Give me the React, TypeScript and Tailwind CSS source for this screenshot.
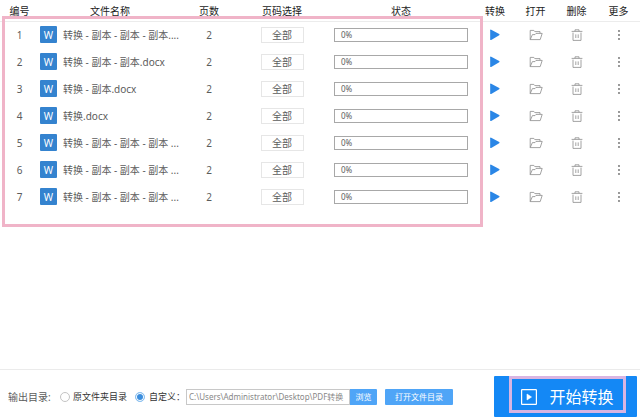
import { useState } from "react";

const files = [
  { id: 1, name: "转换 - 副本 - 副本 - 副本....", pages: 2, progress: 0 },
  { id: 2, name: "转换 - 副本 - 副本.docx", pages: 2, progress: 0 },
  { id: 3, name: "转换 - 副本.docx", pages: 2, progress: 0 },
  { id: 4, name: "转换.docx", pages: 2, progress: 0 },
  { id: 5, name: "转换 - 副本 - 副本 - 副本 ...", pages: 2, progress: 0 },
  { id: 6, name: "转换 - 副本 - 副本 - 副本 ...", pages: 2, progress: 0 },
  { id: 7, name: "转换 - 副本 - 副本 - 副本 ...", pages: 2, progress: 0 },
];

const headers = ["编号", "文件名称", "页数", "页码选择", "状态", "转换", "打开", "删除", "更多"];

function PlayIcon() {
  return (
    <svg width="10" height="12" viewBox="0 0 10 12" fill="#2a86e6">
      <path d="M0.2 1.2Q0.2 0.2 1.2 0.7L9.2 5Q10 5.6 9.2 6.2L1.2 10.9Q0.2 11.4 0.2 10.4Z" />
    </svg>
  );
}

function FolderIcon() {
  return (
    <svg width="14" height="12" viewBox="0 0 14 12" fill="none" stroke="#8c8c8c" strokeWidth="0.8">
      <path d="M1.2 10.6V1.4H4.8L5.8 2.6H11V4.2" />
      <path d="M1.2 10.6L3.4 5.6H6L7 4.4H13.2L11.2 10.6Z" />
    </svg>
  );
}

function TrashIcon() {
  return (
    <svg width="12" height="12" viewBox="0 0 12 12" fill="none" stroke="#8c8c8c" strokeWidth="0.8">
      <path d="M0.6 2.4H11.4M4 2.2V0.8H8V2.2" />
      <path d="M2 3.6V11.4H10V3.6M4.8 5.4V9M7.2 5.4V9" />
    </svg>
  );
}

function MoreIcon() {
  return (
    <svg width="4" height="12" viewBox="0 0 4 12" fill="#6a6a6a">
      <circle cx="2" cy="2" r="0.9" />
      <circle cx="2" cy="6" r="0.9" />
      <circle cx="2" cy="10" r="0.9" />
    </svg>
  );
}

export default function App() {
  const [target, setTarget] = useState("custom");

  const radio =
    "appearance-none w-[10px] h-[10px] rounded-full border border-[#c4c4c4] bg-white checked:border-[#8fc3f0] checked:bg-[#3b8ede] checked:shadow-[inset_0_0_0_1px_#fff]";

  return (
    <div className="min-h-screen flex flex-col bg-white text-[10px] leading-4 text-[#5c5c5c] font-['Noto_Sans','Noto_Sans_CJK_SC',sans-serif]">
      <main className="relative flex-1">
        <table className="w-full table-fixed border-collapse">
          <colgroup>
            <col className="w-[39px]" />
            <col />
            <col className="w-[56px]" />
            <col className="w-[90px]" />
            <col className="w-[148px]" />
            <col className="w-[40px]" />
            <col className="w-[41px]" />
            <col className="w-[41px]" />
            <col className="w-[43px]" />
          </colgroup>
          <thead>
            <tr className="h-[21px] border-b border-[#ececec] text-[#222]">
              {headers.map((header) => (
                <th key={header} className="p-0 pt-0.5 font-normal">
                  {header}
                </th>
              ))}
            </tr>
          </thead>
          <tbody>
            {files.map((file) => (
              <tr key={file.id} className="h-[27px] text-center">
                <td className="p-0">{file.id}</td>
                <td className="p-0">
                  <div className="flex items-center gap-1.5 pl-px whitespace-nowrap">
                    <span className="w-[17px] h-[17px] flex items-center justify-center rounded-[1px] bg-[#3483cf] text-[10px] text-white">
                      W
                    </span>
                    {file.name}
                  </div>
                </td>
                <td className="p-0">{file.pages}</td>
                <td className="p-0">
                  <button className="block mx-auto w-[43px] h-4 leading-3.5 border border-[#e6e6e6]">全部</button>
                </td>
                <td className="p-0">
                  <div className="relative mx-auto w-[134px] h-3.5 border border-[#a8a8a8] text-left">
                    <div className="absolute inset-y-0 left-0 bg-[#9fd0fb]" style={{ width: `${file.progress}%` }} />
                    <span className="relative block pl-1.5 text-[8px] leading-3">{file.progress}%</span>
                  </div>
                </td>
                <td className="p-0">
                  <button aria-label="转换" className="block mx-auto">
                    <PlayIcon />
                  </button>
                </td>
                <td className="p-0">
                  <button aria-label="打开" className="block mx-auto">
                    <FolderIcon />
                  </button>
                </td>
                <td className="p-0">
                  <button aria-label="删除" className="block mx-auto">
                    <TrashIcon />
                  </button>
                </td>
                <td className="p-0">
                  <button aria-label="更多" className="block mx-auto">
                    <MoreIcon />
                  </button>
                </td>
              </tr>
            ))}
          </tbody>
        </table>
        {/* highlight around the file list */}
        <div className="absolute left-0.5 right-[157px] top-4 h-[211px] border-3 border-[#f0b4c8] pointer-events-none" />
      </main>

      <footer className="flex items-center border-t border-[#ebebeb] pt-1.5 pb-[3px] pl-2 pr-[3px]">
        <span className="w-[52px]">输出目录:</span>
        <label className="flex items-center gap-[3px] text-[9px] text-[#333]">
          <input
            type="radio"
            name="target"
            className={radio}
            checked={target === "source"}
            onChange={() => setTarget("source")}
          />
          原文件夹目录
        </label>
        <label className="flex items-center gap-1 ml-2 text-[9px] text-[#333]">
          <input
            type="radio"
            name="target"
            className={radio}
            checked={target === "custom"}
            onChange={() => setTarget("custom")}
          />
          自定义：
        </label>
        <input
          type="text"
          aria-label="自定义目录"
          className="w-[164px] h-4 ml-px pl-0.5 border border-[#c8c8c8] text-[8px] text-[#888]"
          defaultValue="C:\Users\Administrator\Desktop\PDF转换"
        />
        <button className="w-[27px] h-4 rounded-r-[1px] bg-[#4fa5f7] text-[8px] text-white">浏览</button>
        <button className="w-[68px] h-4 ml-2 rounded-[1px] bg-[#4fa5f7] text-[8px] text-white">打开文件目录</button>
        <button className="relative w-[143px] h-[41px] ml-auto flex items-center justify-center gap-3 pl-1 rounded-[1px] bg-[#1488f5] text-base text-white">
          <svg width="16" height="16" viewBox="0 0 16 16" fill="none" stroke="white" strokeWidth="1.2">
            <rect x="0.6" y="0.6" width="14.8" height="14.8" rx="0.5" />
            <path d="M6 5L10.5 8L6 11Z" fill="white" strokeWidth="0.6" />
          </svg>
          开始转换
          <span className="absolute top-0 left-[15px] right-[11px] bottom-1 border-3 border-[#d9b5e2]" />
        </button>
      </footer>
    </div>
  );
}
